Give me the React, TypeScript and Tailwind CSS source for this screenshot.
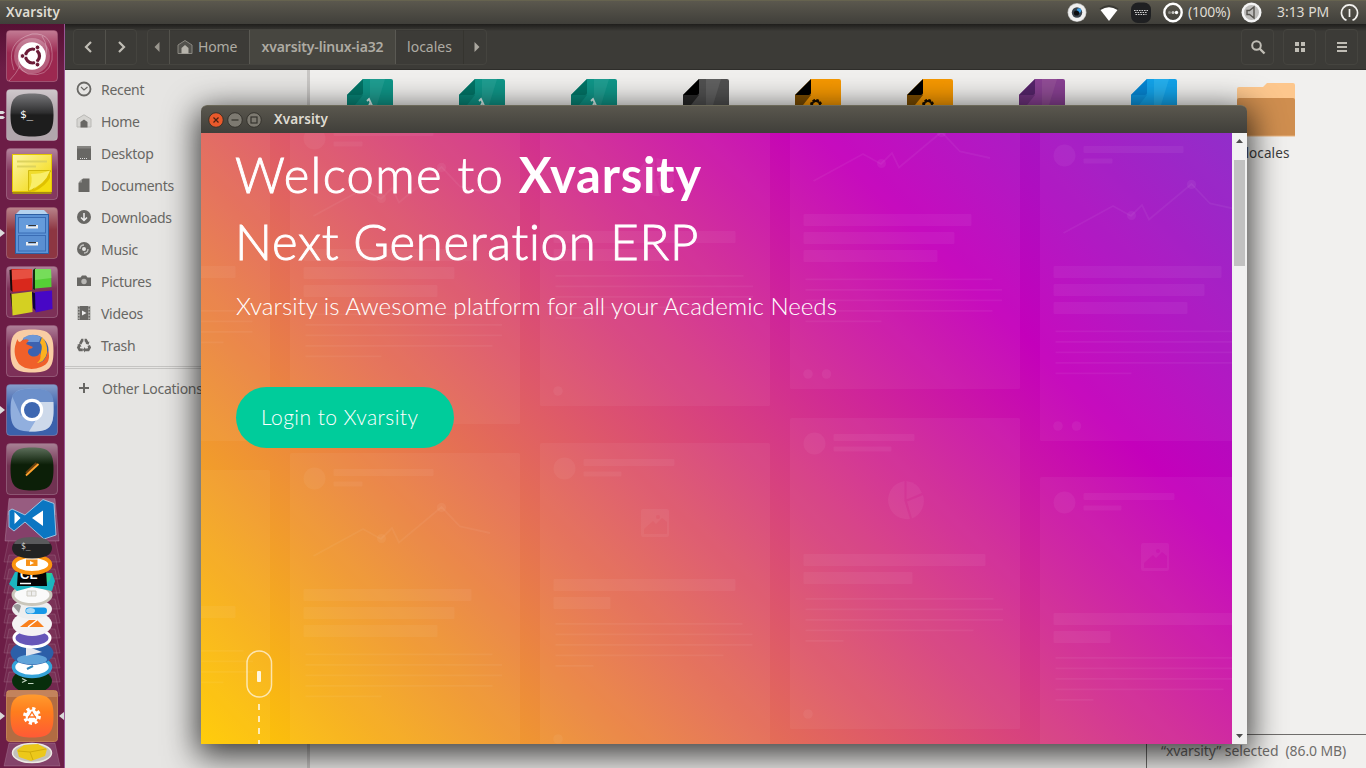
import React from "react";

const UI = "font-['Noto_Sans',sans-serif]";

/* ---------- top bar ---------- */

function TopBar() {
  return (
    <header className="flex h-6 shrink-0 items-center border-t border-[#66634f] bg-gradient-to-b from-[#5b584e] to-[#403f3a] pl-[6px] pr-[7px] text-[14px] leading-none text-[#dfdbd2]">
      <span className="text-[13.500px] font-semibold tracking-[0.100px]">Xvarsity</span>
      <div className="ml-auto flex items-center">
        <svg width="20" height="22" viewBox="0 0 20 22">
          <circle cx="10" cy="10.500" r="9.500" fill="#b9b9b7" />
          <circle cx="10" cy="10.500" r="8.800" fill="#efefef" />
          <circle cx="10" cy="10.500" r="5.200" fill="#39424b" />
          <circle cx="12" cy="8.500" r="2.300" fill="#3a9be0" />
          <circle cx="9.500" cy="11" r="2.600" fill="#0b0d10" />
        </svg>
        <svg className="ml-[12px]" width="20" height="22" viewBox="0 0 20 22">
          <path d="M0.5 6.5Q10 -0.5 19.5 6.5L18 8.500Q10 2 2 8.500Z" fill="#3a3934" />
          <path d="M1.500 8Q10 2.500 18.500 8L10 19Z" fill="#fff" />
        </svg>
        <svg className="ml-[12px]" width="20" height="22" viewBox="0 0 20 22">
          <rect x="0" y="0.500" width="20" height="20.500" rx="7" fill="#1f2022" />
          <path d="M3 8.500H17M4 10.500H16M4.500 12.500H15.500" stroke="#d0d0d0" strokeWidth="1" strokeDasharray="1.600 0.900" />
        </svg>
        <svg className="ml-[12px]" width="20" height="22" viewBox="0 0 20 22">
          <circle cx="10" cy="10.500" r="8.700" fill="none" stroke="#fff" strokeWidth="2.400" />
          <circle cx="6.500" cy="10.500" r="1.500" fill="#8a8983" />
          <circle cx="10" cy="10.500" r="1.500" fill="#c8c7c3" />
          <circle cx="13.500" cy="10.500" r="1.700" fill="#fff" />
        </svg>
        <span className="relative -top-px ml-[5px] w-[43px] whitespace-nowrap tracking-[-0.300px]">(100%)</span>
        <svg className="ml-[10px]" width="21" height="22" viewBox="0 0 21 22">
          <circle cx="10.500" cy="10.500" r="10" fill="#f4f4f4" />
          <circle cx="10.500" cy="10.500" r="7.500" fill="#bdbcba" />
          <path d="M6 8.500H8.500L13 5V16L8.500 12.500H6Z" fill="none" stroke="#55534e" strokeWidth="1.400" />
        </svg>
        <span className="relative -top-px ml-[15px] w-[52px] whitespace-nowrap tracking-[-0.050px]">3:13 PM</span>
        <svg className="ml-[11px]" width="19" height="22" viewBox="0 0 19 22">
          <path d="M6.500 18.300A8 8 0 1 1 12.500 18.300" fill="none" stroke="#f2f1ee" strokeWidth="1.700" />
          <path d="M9.500 7V15" stroke="#f2f1ee" strokeWidth="1.700" />
        </svg>
      </div>
    </header>
  );
}

/* ---------- launcher ---------- */

type TileProps = { base: string; children: React.ReactNode; mark?: "one" | "two" };

function Tile({ base, children, mark }: TileProps) {
  return (
    <div className="flex h-[52px] w-full items-center">
      <svg width="6" height="12" viewBox="0 0 6 12" className="shrink-0">
        {mark === "one" && <path d="M0 2L5 6L0 10Z" fill="#dcdcdc" />}
        {mark === "two" && <path d="M0 2H3L5 3.500L3 5H0ZM0 7H3L5 8.500L3 10H0Z" fill="#dcdcdc" />}
      </svg>
      <svg width="52" height="52" viewBox="0 0 52 52" className="shrink-0">
        <rect x="0.500" y="0.500" width="51" height="51" rx="3.500" fill={base} stroke="#fff" strokeOpacity="0.220" />
        <rect x="1" y="1" width="50" height="22" rx="3" fill="url(#gloss)" />
        {children}
      </svg>
    </div>
  );
}

const SQ = "M26 4.500C43 4.500 47.500 9 47.500 26S43 47.500 26 47.500S4.500 43 4.500 26S9 4.500 26 4.500Z";

function Launcher() {
  return (
    <aside className="flex w-[65px] shrink-0 flex-col gap-[7px] border-r border-[#9a5796] bg-[#6c1d46] bg-gradient-to-b from-[#561034] via-[#6c1d46] via-[6%] to-[#6c1d46] pt-[6px]">
      <svg width="0" height="0" className="absolute">
        <defs>
          <linearGradient id="gloss" x1="0" y1="0" x2="0" y2="1">
            <stop offset="0" stopColor="#fff" stopOpacity="0.38" />
            <stop offset="1" stopColor="#fff" stopOpacity="0" />
          </linearGradient>
          <linearGradient id="dark" x1="0" y1="0" x2="0" y2="1">
            <stop offset="0" stopColor="#77777a" />
            <stop offset="0.45" stopColor="#2e2e2f" />
            <stop offset="0.5" stopColor="#1d1d1d" />
          </linearGradient>
          <linearGradient id="note" x1="0" y1="0" x2="1" y2="1">
            <stop offset="0" stopColor="#fdf6a8" />
            <stop offset="1" stopColor="#f2d600" />
          </linearGradient>
          <linearGradient id="green" x1="0" y1="0" x2="0" y2="1">
            <stop offset="0" stopColor="#5d6f5b" />
            <stop offset="0.4" stopColor="#0c1f08" />
          </linearGradient>
          <linearGradient id="orange" x1="0" y1="0" x2="0" y2="1">
            <stop offset="0" stopColor="#ff9b2e" />
            <stop offset="0.4" stopColor="#ff7d1d" />
            <stop offset="1" stopColor="#ff5a36" />
          </linearGradient>
        </defs>
      </svg>
      <Tile base="#9c2850">
        <circle cx="26" cy="26" r="18" fill="#fff" opacity="0.250" />
        <path d="M8 40Q-2 12 26 4Q48 2 46 30Q42 48 22 44Q8 38 14 20Q24 8 36 18M3 51Q10 44 14 36M36 6Q44 18 38 30" fill="none" stroke="#fff" strokeOpacity="0.300" />
        <circle cx="26" cy="26" r="13.800" fill="#fff" />
        <circle cx="26.500" cy="26" r="7" fill="none" stroke="#6b1b37" strokeWidth="3.200" />
        <path d="M26.500 26L15 26M26.500 26L32 16M26.500 26L32 36" stroke="#fff" strokeWidth="1.600" />
        <circle cx="26.500" cy="26" r="4" fill="#fff" />
        <circle cx="16.500" cy="26" r="2.300" fill="#6b1b37" stroke="#fff" strokeWidth="0.800" />
        <circle cx="31.500" cy="17.400" r="2.300" fill="#6b1b37" stroke="#fff" strokeWidth="0.800" />
        <circle cx="31.500" cy="34.600" r="2.300" fill="#6b1b37" stroke="#fff" strokeWidth="0.800" />
      </Tile>
      <Tile base="#b1a6ac" mark="two">
        <path d={SQ} fill="url(#dark)" />
        <text x="14" y="29" fill="#fff" fontSize="11" fontFamily="DejaVu Sans Mono">$_</text>
      </Tile>
      <Tile base="#85385f">
        <rect x="6.500" y="7" width="39" height="39" fill="#a88d10" />
        <rect x="6.500" y="6.500" width="39" height="37" fill="url(#note)" stroke="#e4c800" />
        <path d="M11 13.500H41M11 18.500H30" stroke="#ddd35e" strokeWidth="2" />
        <path d="M22.500 43V22.500H44.500V24L25 43Z" fill="#f0dc2c" stroke="#c8b000" strokeWidth="0.800" />
        <path d="M23 42Q27 34 25 26Q35 26 44 22.500Q40 36 23 42Z" fill="#f9ee6a" />
        <path d="M23 43Q39 37 44 23V43Z" fill="#dfc100" />
        <path d="M28 43.500Q40 38 44.500 29V43.500Z" fill="#f4dd10" />
      </Tile>
      <Tile base="#8d3642" mark="one">
        <path d="M9 8L14 3H38L43 8Z" fill="#b4d2ee" />
        <rect x="9.500" y="7.500" width="33" height="39" fill="#5c93d6" stroke="#2d5fa3" />
        <rect x="12.500" y="10.500" width="27" height="15.500" fill="#659bdb" stroke="#3a6cb4" />
        <rect x="12.500" y="28.500" width="27" height="15.500" fill="#5a8fd2" stroke="#3a6cb4" />
        <path d="M21 18V20.500H31V18M21 35V37.500H31V35" fill="none" stroke="#eee" strokeWidth="2" />
        <path d="M22.500 18.500H30M22.500 35.500H30" stroke="#333" />
      </Tile>
      <Tile base="#7d3058">
        <path d="M3.500 4L7 3V26L4.500 24Z" fill="#190a0a" />
        <path d="M5.500 3L26 3V24L6.500 26Z" fill="#d9281c" />
        <path d="M6 4L26 3V12L6 14Z" fill="#f06a5a" opacity="0.600" />
        <path d="M27 4L29.500 2L29 24L27 23Z" fill="#10300a" />
        <path d="M29 3L45 3L45.500 21L29 22.500Z" fill="#55cf36" />
        <path d="M29 3L45 3L45.500 12L29 14Z" fill="#8ce673" opacity="0.600" />
        <path d="M4 27L7 49L8 30Z" fill="#191906" />
        <path d="M5.500 28L26 25.500L26.500 46L6.500 49.500Z" fill="#d4d022" />
        <path d="M26 26L31 28L31 46L27 42Z" fill="#10043a" />
        <path d="M29 26L46 24.500L46.500 43L29.500 46.500Z" fill="#4707c5" />
      </Tile>
      <Tile base="#7d3058">
        <path d={SQ} fill="#f9cda4" />
        <circle cx="27.500" cy="25" r="15" fill="#3c62b0" />
        <path d="M17 13Q26 7 35 12L33 17H18Z" fill="#6e98d6" />
        <path d="M36 12Q42 18 41 28Q39 38 28 39L23 37Q35 34 35 27Q37 20 34 18Z" fill="#fbb11f" />
        <path d="M11.500 14Q12 17 14 17Q18 13 23 15L20 19L27 22Q26 24 23 24Q20 28 25 31Q31 33 34 28Q36 34 31 38Q40 38 42 25Q46 38 35 42Q22 47 13 39Q5 28 11.500 14Z" fill="#f0602a" />
      </Tile>
      <Tile base="#3b61ab" mark="one">
        <path d={SQ} fill="#91afde" />
        <path d="M26 4.500C43 4.500 47 9 47.500 18H26L15 32L6 12Q10 4.500 26 4.500Z" fill="#6b8fca" />
        <path d="M27 18H47.500V26C47.500 43 43 47.500 26 47.500H23L33 31Q37 24 32 18Z" fill="#cdd9ea" />
        <circle cx="26" cy="26" r="11.200" fill="#fff" />
        <circle cx="26" cy="26" r="8" fill="#3e67b1" />
      </Tile>
      <Tile base="#713252">
        <path d={SQ} fill="url(#green)" />
        <path d="M20.500 30.500L31 20.500" stroke="#6a4110" strokeWidth="3.500" />
        <path d="M20 32.500L32.500 21" stroke="#ffa32e" strokeWidth="1.800" />
      </Tile>
      <FoldedStack />
    </aside>
  );
}

function FoldedStack() {
  const slabs = [562, 579, 593, 609, 623, 638, 653, 668, 682, 696];
  return (
    <svg width="64" height="273" viewBox="0 495 64 273" className="-mt-[7px] shrink-0">
      {slabs.map((b) => (
        <path key={b} d={`M9 ${b - 24}H55L60 ${b}H4Z`} fill="#fff" fillOpacity="0.050" stroke="#fff" strokeOpacity="0.120" />
      ))}
      <path d="M9 498.500H55L59 541H5Z" fill="#85406a" stroke="#fff" strokeOpacity="0.200" />
      <path d="M9 499H55L56 515H8Z" fill="#fff" opacity="0.150" />
      <path d="M12 509L25 515L43 499.500L54 503.500L56 535L44 539L25 522L14 531L9 527V511Z" fill="#0b76c2" stroke="#a9cbe4" strokeWidth="0.900" />
      <path d="M14.500 512V524L20.500 518ZM43 510.500L32 518L43 526Z" fill="#fff" />
      <ellipse cx="32" cy="681" rx="20" ry="12" fill="#082e0c" />
      <path d="M22 678.500L26 680.500L22 682.500M28 683.500H33.500" fill="none" stroke="#c3d6c3" strokeWidth="1.200" />
      <ellipse cx="32" cy="667" rx="18.500" ry="9.500" fill="#fff" stroke="#35a3d8" strokeWidth="3.500" />
      <path d="M27 669L33 666" stroke="#2f85b8" strokeWidth="2" />
      <ellipse cx="32" cy="653" rx="21.500" ry="12" fill="#2c5fa8" />
      <ellipse cx="32" cy="659.500" rx="15" ry="5" fill="#7cc7f2" opacity="0.650" />
      <path d="M26 646L42 652L26 656Z" fill="#e4e6ee" />
      <ellipse cx="32" cy="638" rx="18" ry="9" fill="#6656b8" stroke="#fff" strokeWidth="3" />
      <ellipse cx="32" cy="624" rx="20" ry="12" fill="#f4f3f4" />
      <path d="M20 627L29 620H37L44 627Z" fill="#f9801d" />
      <path d="M28 627L37 620" stroke="#fff" strokeWidth="1.500" />
      <ellipse cx="32" cy="609" rx="20" ry="10" fill="#eeeeef" />
      <path d="M13 606Q18 602 21 606L19 613Z" fill="#9a9a9a" />
      <rect x="25.500" y="607.500" width="21.500" height="6.500" rx="3.200" fill="#1698e8" />
      <ellipse cx="30.500" cy="610.800" rx="4.500" ry="2.700" fill="#a8daf7" />
      <ellipse cx="32" cy="595" rx="19" ry="9.500" fill="#fafafa" stroke="#c9c6bb" strokeWidth="3" />
      <path d="M27 591H36V596H27ZM31.500 591V596" fill="#eee" stroke="#cfcdc4" />
      <path d="M15 572L52 573L55 581L52 591L32 587L17 591L9 584Z" fill="#1cb5c0" />
      <path d="M32 573L52 573L50 580L45 585Z" fill="#28cf92" />
      <path d="M18 570H46L47 586H17Z" fill="#050505" />
      <text x="20" y="579" fill="#fff" fontSize="13" fontWeight="700" fontFamily="Liberation Sans">CL</text>
      <path d="M20 583.500H31" stroke="#fff" strokeWidth="1.500" />
      <ellipse cx="32" cy="564.500" rx="18.300" ry="8.500" fill="#fff" stroke="#fb9410" strokeWidth="4" />
      <rect x="26" y="559.500" width="11.500" height="6.500" fill="#f7921a" />
      <path d="M30 561V565L34 563Z" fill="#fff" />
      <path d="M12 548Q12 539 32 538Q52 539 52 548Q52 558 32 558.500Q12 558 12 548Z" fill="#222223" />
      <path d="M14 544Q16 537 32 537Q48 537 50 544Z" fill="#5a5a5c" />
      <text x="21" y="549" fill="#d8d8d8" fontSize="8" fontFamily="DejaVu Sans Mono">$_</text>
      <rect x="6.500" y="690.500" width="51" height="51" rx="3" fill="#b26c42" stroke="#c08056" />
      <rect x="7" y="691" width="50" height="6" fill="#e1b08c" opacity="0.350" />
      <path d={SQ} transform="translate(6 690)" fill="url(#orange)" />
      <circle cx="32" cy="716" r="6.500" fill="#fff" />
      <circle cx="32" cy="716" r="7.300" fill="none" stroke="#fff" strokeWidth="3.200" strokeDasharray="3.100 2.630" />
      <path d="M28 718.500L32 712L36 718.500M28 717H36" fill="none" stroke="#ff7220" strokeWidth="1.300" />
      <path d="M0 712L5 716L0 720ZM64 712L59 716L64 720Z" fill="#d9d9d9" />
      <path d="M9 743H55L60 766H4Z" fill="#84436a" stroke="#fff" strokeOpacity="0.150" />
      <ellipse cx="32" cy="753" rx="19.500" ry="9.500" fill="#c4c1ba" stroke="#ece9e4" strokeWidth="1.500" />
      <path d="M17 750L24 745L38 744L47 749L45 756L31 761L19 757Z" fill="#ecc81a" />
      <path d="M18 751L30 752L46 749M30 752L33 760" fill="none" stroke="#d0ac0b" />
    </svg>
  );
}

/* ---------- file manager ---------- */

function HomeGlyph({ dim, solid }: { dim: string; solid: string }) {
  return (
    <svg width="16" height="16" viewBox="0 0 16 16">
      <path d="M1 14.500V6L8 1.500L15 6V14.500Z" fill={dim} fillOpacity="0.300" stroke={dim} />
      <path d="M4.500 14.500V9L8 6L11.500 9V14.500Z" fill={solid} />
    </svg>
  );
}

function HeaderBar() {
  const box = "flex h-9 items-center justify-center rounded-[4px] border border-[#45443f] bg-[#3c3b37]";
  return (
    <div className="flex h-[46px] shrink-0 items-center border-b border-[#2e2d2a] bg-gradient-to-b from-[#1f1e1c] via-[#3c3b37] via-[16%] to-[#3c3b37] px-[8px] text-[14px] text-[#aeaba3]">
      <div className="flex h-9 w-[64px] overflow-hidden rounded-[4px] border border-[#45443f]">
        <div className="flex flex-1 items-center justify-center border-r border-[#53524c]">
          <svg width="10" height="14" viewBox="0 0 10 14"><path d="M7 2L2 7L7 12" fill="none" stroke="#c0bdb5" strokeWidth="2.200" /></svg>
        </div>
        <div className="flex flex-1 items-center justify-center">
          <svg width="10" height="14" viewBox="0 0 10 14"><path d="M3 2L8 7L3 12" fill="none" stroke="#c0bdb5" strokeWidth="2.200" /></svg>
        </div>
      </div>
      <div className="ml-[10px] flex h-9 w-[340px] overflow-hidden rounded-[4px] border border-[#45443f]">
        <div className="flex w-[22px] items-center justify-center border-r border-[#53524c] pr-[4px]">
          <svg width="6" height="10" viewBox="0 0 6 10"><path d="M5.500 0V10L0.500 5Z" fill="#99968e" /></svg>
        </div>
        <div className="flex w-[80px] items-center gap-[5px] border-r border-[#5a5953] pl-[7px]">
          <HomeGlyph dim="#8b8982" solid="#b7b4ac" />
          <span className="tracking-[-0.150px]">Home</span>
        </div>
        <div className="flex w-[146px] items-center justify-center whitespace-nowrap border-r border-[#5a5953] bg-[#474640] font-semibold tracking-[-0.150px]">
          xvarsity-linux-ia32
        </div>
        <div className="flex w-[68px] items-center justify-center border-r border-[#35342f]">locales</div>
        <div className="flex flex-1 items-center justify-center pl-[3px]">
          <svg width="6" height="10" viewBox="0 0 6 10"><path d="M0.500 0V10L5.500 5Z" fill="#aaa79f" /></svg>
        </div>
      </div>
      <div className="ml-auto flex gap-[9px]">
        <div className={`${box} w-[33px]`}>
          <svg width="16" height="16" viewBox="0 0 16 16"><circle cx="6.500" cy="6.500" r="4.300" fill="none" stroke="#c0bdb5" strokeWidth="2" /><path d="M9.500 9.500L14.500 14.500" stroke="#c0bdb5" strokeWidth="2.400" /></svg>
        </div>
        <div className={`${box} w-[33px]`}>
          <svg width="10" height="10" viewBox="0 0 10 10"><path d="M0 0H4V4H0ZM6 0H10V4H6ZM0 6H4V10H0ZM6 6H10V10H6Z" fill="#c0bdb5" /></svg>
        </div>
        <div className={`${box} w-[33px]`}>
          <svg width="10" height="10" viewBox="0 0 10 10"><path d="M0 0H10V2H0ZM0 4H10V6H0ZM0 8H10V10H0Z" fill="#c0bdb5" /></svg>
        </div>
      </div>
    </div>
  );
}

const G = "#686764";
const places: { label: string; icon: React.ReactNode }[] = [
  { label: "Recent", icon: <><circle cx="8" cy="8" r="6.500" fill="none" stroke={G} strokeWidth="1.800" /><path d="M5 6L8 9L11.500 6" fill="none" stroke={G} strokeWidth="1.200" /></> },
  { label: "Home", icon: <><path d="M1 14V6L8 1.800L15 6V14Z" fill="#d6d5d2" stroke="#bab9b6" /><path d="M4.500 14.500V9L8 6.500L11.500 9V14.500Z" fill={G} /></> },
  { label: "Desktop", icon: <><path d="M1 1H15V4H1Z" fill="#858481" /><path d="M1 3.500H15V15H1Z" fill={G} /><path d="M4 13.500H12" stroke="#ddd" strokeDasharray="1 1" /></> },
  { label: "Documents", icon: <><path d="M7 1.500H13.500V15H2.500V6Z" fill={G} /><path d="M6 2L2.500 5.500H6Z" fill="#9a9996" /></> },
  { label: "Downloads", icon: <><circle cx="8" cy="8" r="7" fill={G} /><path d="M8 4V11M5 8.500L8 11.500L11 8.500" fill="none" stroke="#eee" strokeWidth="1.500" /></> },
  { label: "Music", icon: <><circle cx="8" cy="8" r="7" fill={G} /><circle cx="8" cy="8" r="2" fill="#e4e3e1" /><path d="M4 8Q4 4 8 4M12 8Q12 12 8 12" fill="none" stroke="#c4c3c1" strokeWidth="1.300" /></> },
  { label: "Pictures", icon: <><path d="M1 4.500H4.500L6 2.500H10L11.500 4.500H15V13H1Z" fill={G} /><circle cx="8" cy="8.500" r="2.700" fill="#b9b8b5" /></> },
  { label: "Videos", icon: <><path d="M1.500 1H14.500V15H1.500Z" fill="#a3a29f" /><path d="M4 1H12V15H4Z" fill={G} /><path d="M2.800 2V15M13.200 2V15" stroke={G} strokeWidth="1.500" strokeDasharray="1.500 1.500" /><path d="M6 5.500V10.500L10.500 8Z" fill="#eee" /></> },
  { label: "Trash", icon: <><path d="M4.200 6.800L6.200 3.200L7.400 3.200M8.600 3.200H9.800L11.800 6.500M12.700 8.500L13.600 10.500L12.300 12.800H8.500M6.800 12.800H3.700L2.400 10.500L3.400 8.500" fill="none" stroke={G} strokeWidth="2.700" /><path d="M12.500 7.800L9.500 6.500L13.500 4.500ZM9 10V15.500L6.800 12.800ZM1 8L4 6.500L5.500 10Z" fill={G} /></> },
];

function Sidebar() {
  return (
    <nav className="flex w-[245px] shrink-0 flex-col border-r-[3px] border-[#c9c7c5] bg-[#e6e5e3] pt-[3px] text-[14px] text-[#686764]">
      {places.map((p) => (
        <div key={p.label} className="flex h-8 items-center gap-[9px] pl-[11px]">
          <svg width="16" height="16" viewBox="0 0 16 16">{p.icon}</svg>
          <span className="tracking-[-0.280px]">{p.label}</span>
        </div>
      ))}
      <div className="mt-[5px] h-[3px] border-y border-[#c5c4c2]" />
      <div className="mt-[3px] flex h-8 items-center gap-[10px] pl-[11px]">
        <svg width="16" height="16" viewBox="0 0 16 16"><path d="M8 3V13M3 8H13" stroke={G} strokeWidth="2" /></svg>
        <span className="whitespace-nowrap tracking-[-0.280px]">Other Locations</span>
      </div>
    </nav>
  );
}

type FileLook = { body: string; shade: string; fold: string; mark: "a" | "gear" | "none" };
const teal: FileLook = { body: "#0f9688", shade: "#26a196", fold: "#027466", mark: "a" };
const amber: FileLook = { body: "#f69802", shade: "#f69802", fold: "#000000", mark: "gear" };
const files: FileLook[] = [
  teal, teal, teal,
  { body: "#505050", shade: "#666666", fold: "#000000", mark: "none" },
  amber, amber,
  { body: "#884092", shade: "#965399", fold: "#55246a", mark: "none" },
  { body: "#12a3ea", shade: "#2cb4f0", fold: "#0585d2", mark: "none" },
];

function FileIcon({ f }: { f: FileLook }) {
  return (
    <svg width="46" height="58" viewBox="0 0 46 58">
      <path d="M16 0H44Q46 0 46 2V58H0V16Z" fill={f.body} />
      <path d="M23 0H38L30 26H23Z" fill={f.shade} opacity="0.700" />
      <path d="M0 16H16L0 36Z" fill={f.fold} opacity="0.500" />
      <path d="M16 0V14Q16 16 14 16H0Z" fill={f.fold} />
      {f.mark === "a" && <path d="M20 22L22 20L28 33M23.500 23L20 31" fill="none" stroke="#dff2ef" strokeWidth="1.800" />}
      {f.mark === "gear" && <circle cx="21" cy="26" r="4.500" fill="none" stroke="#160d00" strokeWidth="3" strokeDasharray="2.300 1.200" />}
      {f.mark === "gear" && <circle cx="21" cy="26" r="4" fill="none" stroke="#160d00" strokeWidth="2" />}
    </svg>
  );
}

function FileArea() {
  return (
    <main className="flex min-w-0 flex-1 flex-col bg-[#f1f0ee]">
      <div className="flex flex-1 pl-[4px] pt-[9px]">
        {files.map((f, i) => (
          <div key={i} className="flex w-[112px] shrink-0 justify-center"><FileIcon f={f} /></div>
        ))}
        <div className="flex w-[112px] shrink-0 flex-col items-center pt-[4px]">
          <svg width="58" height="54" viewBox="0 0 58 54">
            <path d="M0 6Q0 4 2 4H26L30 0H56Q58 0 58 2V20H0Z" fill="#fdc78d" />
            <path d="M0 17Q0 15 2 15H56Q58 15 58 17V53H0Z" fill="#cf8e4f" />
            <path d="M0 53H58" stroke="#e9b27c" />
          </svg>
          <span className="mt-[7px] pl-[3px] text-[13.500px] leading-[18px] tracking-[0.100px] text-[#3c3c3c]">locales</span>
        </div>
      </div>
      <div className="flex h-[34px] w-[220px] items-center self-end border-l border-t border-[#6f6d6b] pb-[2px] pl-[14px] text-[14px] text-[#6f6d6b]">
        <span className="whitespace-pre tracking-[-0.100px]">“xvarsity” selected  (86.0 MB)</span>
      </div>
    </main>
  );
}

/* ---------- app window ---------- */

type Kind = "chart" | "pie" | "image";

function GhostCard({ x, y, kind }: { x: number; y: number; kind: Kind }) {
  const chart = kind === "chart";
  const bars = chart ? [168, 151, 134] : kind === "pie" ? [182, 109] : [182, 57];
  const head = chart ? [100, 29] : kind === "pie" ? [81, 58] : [91, 38];
  const linesTop = chart ? 201.5 : 181;
  const lines = chart ? [187, 196.5, 196.5, 187, 76] : kind === "pie" ? [188, 197.5, 197.5, 168, 38] : [187, 197, 197, 168, 38];
  return (
    <g transform={`translate(${x} ${y})`} fill="#fff">
      <rect width="230" height="311" rx="1.500" fillOpacity="0.048" />
      <g fillOpacity="0.050">
        <circle cx="24.500" cy="25.500" r="11" />
        <rect x="43.500" y="16" width={head[0]} height="7" rx="1" />
        <rect x="43.500" y="28.500" width={head[1]} height="5" rx="1" />
        {bars.map((w, i) => <rect key={i} x="13.500" y={136 + i * 18} width={w} height="12" rx="1" />)}
        {lines.map((w, i) => <rect key={i} x="15.500" y={linesTop - 1 + i * 10.500} width={w} height="1.800" />)}
        <circle cx="18" cy="296" r="4.800" />
        {chart && <circle cx="36.500" cy="296" r="4.800" />}
        {chart && <circle cx="91.500" cy="85.500" r="4.500" />}
        {chart && <circle cx="151.500" cy="54.500" r="4.700" />}
      </g>
      {chart && <path d="M23.500 103L73 76L91 86L102 75L109 89.500L151.500 54L170 73.500L200 80" fill="none" stroke="#fff" strokeOpacity="0.050" strokeWidth="1.800" />}
      {kind === "pie" && (
        <g fillOpacity="0.050">
          <path d="M114.500 63V83L120 101A19 19 0 1 1 114.500 63Z" />
          <path d="M116.500 63A19 19 0 0 1 132 75L116.500 81.500Z" />
          <path d="M133 77A19 19 0 0 1 122 100.500L117 83.500Z" />
        </g>
      )}
      {kind === "image" && (
        <path fillRule="evenodd" fillOpacity="0.050" d="M101 68Q101 66 103 66H127Q129 66 129 68V92Q129 94 127 94H103Q101 94 101 92ZM104 91H127V79L122 75L116 81L113 78L104 86ZM116 74A2 2 0 1 0 120 74A2 2 0 1 0 116 74Z" />
      )}
    </g>
  );
}

const cards: { x: number; y: number; kind: Kind }[] = [
  { x: 40, y: 130, kind: "image" }, { x: 40, y: 470, kind: "pie" },
  { x: 290, y: 113, kind: "chart" }, { x: 290, y: 453, kind: "chart" },
  { x: 540, y: 95, kind: "pie" }, { x: 540, y: 443, kind: "image" },
  { x: 790, y: 78, kind: "chart" }, { x: 790, y: 418, kind: "pie" },
  { x: 1040, y: 130, kind: "chart" }, { x: 1040, y: 477, kind: "image" },
];

function AppWindow() {
  return (
    <section className="absolute left-[201px] top-[105px] flex h-[639px] w-[1046px] flex-col rounded-t-[6px] shadow-[0_8px_32px_4px_rgba(0,0,0,0.75)]">
      <div className="flex h-7 shrink-0 items-center gap-[3px] rounded-t-[6px] border-t border-[#6b6858] bg-gradient-to-b from-[#5a574e] to-[#403f3a] pl-[7px]">
        <svg width="16" height="16" viewBox="0 0 16 16"><circle cx="8" cy="8" r="7.300" fill="#e9592b" stroke="#37332b" /><path d="M5.500 5.500L10.500 10.500M10.500 5.500L5.500 10.500" stroke="#4a2213" strokeWidth="1.200" /></svg>
        <svg width="16" height="16" viewBox="0 0 16 16"><circle cx="8" cy="8" r="7.300" fill="#7d7a71" stroke="#35332d" /><path d="M4.500 8H11.500" stroke="#35332d" strokeWidth="1.200" /></svg>
        <svg width="16" height="16" viewBox="0 0 16 16"><circle cx="8" cy="8" r="7.300" fill="#7d7a71" stroke="#35332d" /><rect x="5" y="5" width="6" height="6" fill="none" stroke="#35332d" strokeWidth="1.200" /></svg>
        <span className="ml-[9px] text-[13.500px] font-semibold leading-none tracking-[0.100px] text-[#dfdbd2]">Xvarsity</span>
      </div>
      <div className="flex min-h-0 flex-1">
        <div className="relative flex-1 overflow-hidden bg-[linear-gradient(45deg,#ffcb00_0%,#c400bb_75%,#8c24c8_100%)] font-['Lato',sans-serif] text-white">
          <svg className="absolute inset-0" width="1031" height="611" viewBox="201 133 1031 611">
            {cards.map((c, i) => <GhostCard key={i} {...c} />)}
            <path d="M259 704V744" stroke="#fff" strokeOpacity="0.700" strokeWidth="2" strokeDasharray="6" />
            <rect x="247" y="651" width="24.500" height="46" rx="12.200" fill="none" stroke="#fff" strokeOpacity="0.650" strokeWidth="1.500" />
            <rect x="257" y="671" width="4" height="11" rx="1" fill="#fff" fillOpacity="0.850" />
          </svg>
          <div className="relative flex flex-col items-start pl-[34px] pt-[8px]">
            <h1 className="whitespace-nowrap text-[49px] font-light leading-[67px]">
              <span className="tracking-[1.300px] [-webkit-text-stroke:0.9px_white]">Welcome to </span>
              <strong className="font-bold tracking-[0.800px]">Xvarsity</strong>
              <br />
              <span className="tracking-[0.720px] [-webkit-text-stroke:0.9px_white]">Next Generation ERP</span>
            </h1>
            <p className="ml-px mt-[13px] whitespace-nowrap text-[24.120px] font-light leading-[36px]">
              Xvarsity is Awesome platform for all your Academic Needs
            </p>
            <button className="ml-px mt-[63px] flex h-[61px] w-[218px] items-center rounded-full bg-[#00cc9b] pb-[2px] pl-[25px] text-[21px] font-light tracking-[0.450px]">
              Login to Xvarsity
            </button>
          </div>
        </div>
        <div className="flex w-[15px] flex-col items-center bg-[#f1f1f1]">
          <svg width="15" height="27" viewBox="0 0 15 27" className="shrink-0"><path d="M4 10L7.500 6L11 10Z" fill="#4d4d4d" /></svg>
          <div className="h-[106px] w-[11px] bg-[#c1c1c1]" />
          <svg width="15" height="14" viewBox="0 0 15 14" className="mt-auto"><path d="M4 4L7.500 8L11 4Z" fill="#4d4d4d" /></svg>
        </div>
      </div>
    </section>
  );
}

export default function App() {
  return (
    <div className={`relative flex h-[768px] w-[1366px] flex-col overflow-hidden ${UI}`}>
      <TopBar />
      <div className="flex min-h-0 flex-1">
        <Launcher />
        <div className="flex min-w-0 flex-1 flex-col">
          <HeaderBar />
          <div className="flex min-h-0 flex-1">
            <Sidebar />
            <FileArea />
          </div>
        </div>
      </div>
      <AppWindow />
    </div>
  );
}
